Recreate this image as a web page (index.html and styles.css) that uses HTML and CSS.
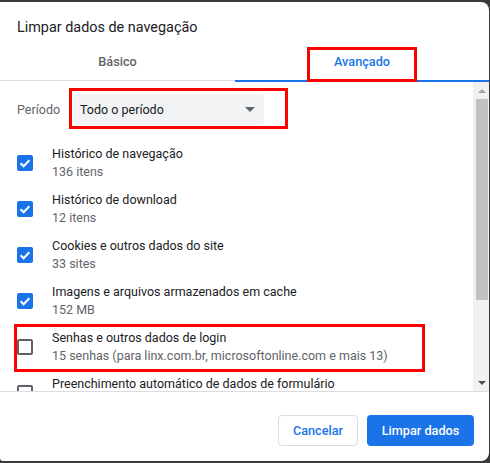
FILE: index.html
```html
<!DOCTYPE html>
<html lang="pt-BR">
<head>
<meta charset="utf-8">
<link rel="stylesheet" href="styles.css">
</head>
<body>
<div class="dialog">
  <div class="title">Limpar dados de navegação</div>
  <div class="tabs">
    <div class="tab">Básico</div>
    <div class="tab active">Avançado<span class="mark mark-tab"></span></div>
  </div>
  <div class="body">
    <div class="content">
      <div class="period">
        <span class="period-label">Período</span>
        <div class="select">
          <span>Todo o período</span>
          <span class="caret"></span>
        </div>
        <span class="mark mark-select"></span>
      </div>
      <div class="item">
        <span class="cb checked"><svg viewBox="0 0 16 16"><path d="M3.6 8.2l3 3 5.8-6" fill="none" stroke="#fff" stroke-width="2"/></svg></span>
        <div class="texts"><div class="t1">Histórico de navegação</div><div class="t2">136 itens</div></div>
      </div>
      <div class="item">
        <span class="cb checked"><svg viewBox="0 0 16 16"><path d="M3.6 8.2l3 3 5.8-6" fill="none" stroke="#fff" stroke-width="2"/></svg></span>
        <div class="texts"><div class="t1">Histórico de download</div><div class="t2">12 itens</div></div>
      </div>
      <div class="item">
        <span class="cb checked"><svg viewBox="0 0 16 16"><path d="M3.6 8.2l3 3 5.8-6" fill="none" stroke="#fff" stroke-width="2"/></svg></span>
        <div class="texts"><div class="t1">Cookies e outros dados do site</div><div class="t2">33 sites</div></div>
      </div>
      <div class="item">
        <span class="cb checked"><svg viewBox="0 0 16 16"><path d="M3.6 8.2l3 3 5.8-6" fill="none" stroke="#fff" stroke-width="2"/></svg></span>
        <div class="texts"><div class="t1">Imagens e arquivos armazenados em cache</div><div class="t2">152 MB</div></div>
      </div>
      <div class="item">
        <span class="cb"></span>
        <div class="texts"><div class="t1">Senhas e outros dados de login</div><div class="t2">15 senhas (para linx.com.br, microsoftonline.com e mais 13)</div></div>
        <span class="mark mark-item"></span>
      </div>
      <div class="item">
        <span class="cb"></span>
        <div class="texts"><div class="t1">Preenchimento automático de dados de formulário</div><div class="t2">&nbsp;</div></div>
      </div>
    </div>
    <div class="scrollbar">
      <div class="sb-btn"><span class="arr up"></span></div>
      <div class="sb-thumb"></div>
      <div class="sb-space"></div>
      <div class="sb-btn"><span class="arr down"></span></div>
    </div>
  </div>
  <div class="footer">
    <button class="btn secondary">Cancelar</button>
    <button class="btn primary">Limpar dados</button>
  </div>
</div>
</body>
</html>
```
FILE: styles.css
```css
* { box-sizing: border-box; }
html, body { margin: 0; padding: 0; }
body {
  background: #3b3b3b;
  width: 490px;
  height: 463px;
  overflow: hidden;
  font-family: Roboto, "Noto Sans", Arial, sans-serif;
  color: #202124;
}
.dialog {
  margin-top: 2px;
  width: 489px;
  height: 459px;
  background: #fff;
  border-radius: 0 8px 8px 3px;
  display: flex;
  flex-direction: column;
  overflow: hidden;
}
.title {
  padding: 16px 0 0 17px;
  height: 42px;
  font-size: 14.4px;
  line-height: 20px;
  color: #202124;
}
.tabs {
  display: grid;
  grid-template-columns: 235px 1fr;
  height: 38px;
  align-items: start;
}
.tab {
  position: relative;
  height: 37px;
  display: flex;
  align-items: center;
  justify-content: center;
  padding-bottom: 2px;
  font-size: 12.7px;
  font-weight: 500;
  color: #5f6368;
  border-bottom: 1px solid #dadce0;
}
.tab.active {
  height: 38px;
  color: #1a73e8;
  border-bottom: 2px solid #1a73e8;
  padding-bottom: 1px;
}
.mark {
  position: absolute;
  border: 3px solid #ff0000;
  pointer-events: none;
}
.mark-tab { left: 72px; top: 3px; width: 110px; height: 35px; }
.body {
  height: 310px;
  display: flex;
  border-bottom: 1px solid #dadce0;
}
.content {
  flex: 1;
  overflow: hidden;
}
.period {
  position: relative;
  display: flex;
  align-items: center;
  height: 58px;
  padding: 12px 0 15px 17px;
}
.period-label {
  width: 56px;
  font-size: 12.5px;
  color: #5f6368;
}
.select {
  width: 191px;
  height: 31px;
  background: #f1f3f4;
  border-radius: 4px;
  display: flex;
  align-items: center;
  justify-content: space-between;
  padding: 0 9px 0 7px;
  font-size: 12.5px;
  color: #202124;
}
.caret {
  width: 0; height: 0;
  border-left: 5px solid transparent;
  border-right: 5px solid transparent;
  border-top: 5px solid #5f6368;
}
.mark-select { left: 69px; top: 6px; width: 219px; height: 41px; }
.item {
  position: relative;
  display: flex;
  align-items: center;
  height: 46px;
  padding: 5px 0 5px 17px;
}
.cb {
  width: 16px;
  height: 16px;
  border: 2px solid #5f6368;
  border-radius: 2px;
  flex: none;
  margin-right: 19px;
  display: flex;
}
.cb.checked {
  background: #1a73e8;
  border: none;
  width: 16px;
  height: 16px;
}
.cb svg { width: 16px; height: 16px; }
.texts { font-size: 12.5px; line-height: 18px; }
.t1 { color: #202124; }
.t2 { color: #5f6368; }
.mark-item { left: 14px; top: 0px; width: 411px; height: 48px; }
.scrollbar {
  width: 16px;
  background: #f1f1f1;
  display: flex;
  flex-direction: column;
  padding: 0 1px 0 3px;
}
.sb-btn {
  height: 17px;
  display: flex;
  align-items: center;
  justify-content: center;
}
.arr { width: 0; height: 0; border-left: 4px solid transparent; border-right: 4px solid transparent; }
.arr.up { border-bottom: 4px solid #a3a3a3; }
.arr.down { border-top: 4px solid #505050; }
.sb-thumb { height: 201px; background: #c1c1c1; }
.sb-space { flex: 1; }
.footer {
  flex: 1;
  display: flex;
  justify-content: flex-end;
  align-items: flex-start;
  gap: 9px;
  padding: 23px 15px 0 0;
}
.btn {
  height: 31px;
  border-radius: 4px;
  font-family: Roboto, "Noto Sans", Arial, sans-serif;
  font-size: 12.7px;
  font-weight: 500;
  cursor: pointer;
}
.btn.secondary {
  width: 80px;
  background: #fff;
  border: 1px solid #dadce0;
  color: #1a73e8;
}
.btn.primary {
  width: 107px;
  background: #1a73e8;
  border: none;
  color: #fff;
}
```
